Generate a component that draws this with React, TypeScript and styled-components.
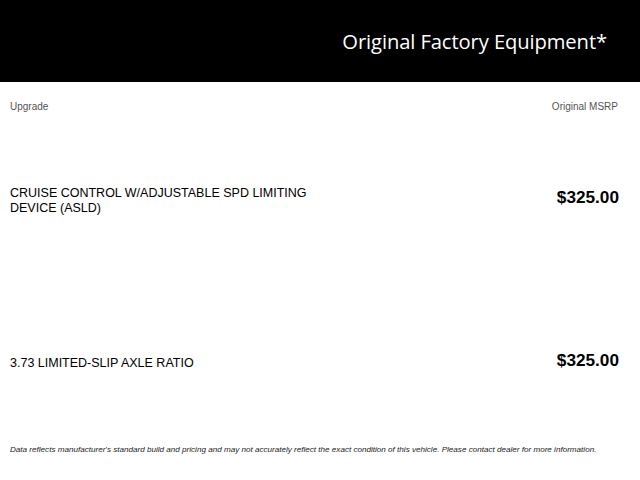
import styled, { createGlobalStyle } from "styled-components";

const GlobalStyle = createGlobalStyle`
  html, body {
    margin: 0;
    padding: 0;
    background: #ffffff;
  }
`;

const items = [
  { name: "CRUISE CONTROL W/ADJUSTABLE SPD LIMITING DEVICE (ASLD)", price: "$325.00" },
  { name: "3.73 LIMITED-SLIP AXLE RATIO", price: "$325.00" },
];

const App = () => {
  return (
    <>
      <GlobalStyle />
      <StyledPage>
        <StyledHeader>
          <StyledTitle>Original Factory Equipment*</StyledTitle>
        </StyledHeader>
        <StyledLabels>
          <span>Upgrade</span>
          <span>Original MSRP</span>
        </StyledLabels>
        {items.map((item) => (
          <StyledRow key={item.name}>
            <StyledName>{item.name}</StyledName>
            <StyledPrice>{item.price}</StyledPrice>
          </StyledRow>
        ))}
        <StyledDisclaimer>
          Data reflects manufacturer's standard build and pricing and may not accurately reflect the exact
          condition of this vehicle. Please contact dealer for more information.
        </StyledDisclaimer>
      </StyledPage>
    </>
  );
};

export default App;

const StyledPage = styled.div`
  width: 640px;
  height: 480px;
  display: flex;
  flex-direction: column;
  font-family: "Liberation Sans", Arial, sans-serif;
  color: #000;
`;

const StyledHeader = styled.header`
  height: 82px;
  background: #000;
  display: flex;
  justify-content: flex-end;
  align-items: center;
  padding-right: 33px;
`;

const StyledTitle = styled.h1`
  margin: 0;
  color: #fff;
  font-family: "Open Sans", sans-serif;
  font-weight: 400;
  font-size: 20.2px;
  letter-spacing: -0.1px;
`;

const StyledLabels = styled.div`
  height: 48px;
  margin-bottom: -11px;
  display: flex;
  justify-content: space-between;
  align-items: center;
  padding: 0 22px 0 10px;
  font-size: 10px;
  color: #555;
`;

const StyledRow = styled.div`
  height: 163px;
  display: flex;
  justify-content: space-between;
  align-items: center;
  padding: 0 21px 0 10px;
`;

const StyledName = styled.div`
  width: 310px;
  font-size: 12.5px;
  line-height: 15px;
`;

const StyledPrice = styled.div`
  font-size: 17.2px;
  font-weight: 700;
  margin-top: -6px;
`;

const StyledDisclaimer = styled.p`
  margin: 0;
  padding: 0 10px;
  font-size: 8.1px;
  font-style: italic;
  color: #222;
`;
